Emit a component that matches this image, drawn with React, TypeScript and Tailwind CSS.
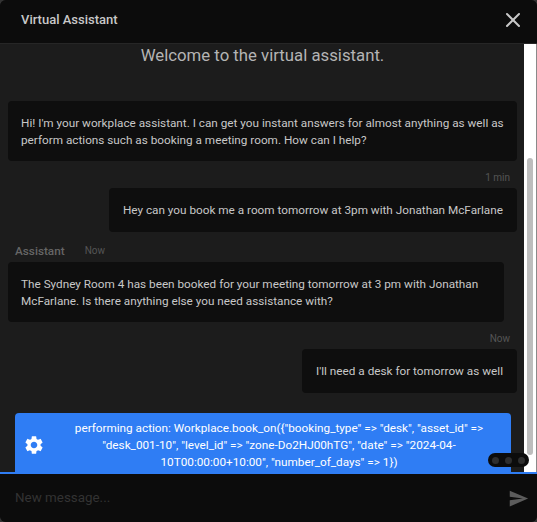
import React from "react"
import { X } from "lucide-react"

const actionText =
  'performing action: Workplace.book_on({"booking_type" => "desk", "asset_id" => "desk_001-10", "level_id" => "zone-Do2HJ00hTG", "date" => "2024-04-10T00:00:00+10:00", "number_of_days" => 1})'

const Bubble = ({ children, className }: { children: React.ReactNode; className: string }) => (
  <div className={`rounded-[4px] bg-[#0e0e0e] text-[11.75px] leading-[17px] text-[#c8c8c8] ${className}`}>{children}</div>
)

const App = () => {
  return (
    <div className="h-[522px] w-[537px] overflow-hidden bg-[#333333] font-['Roboto',sans-serif]">
      <div className="relative flex h-full flex-col overflow-hidden rounded-[6px] bg-[#1c1c1c]">
        {/* Header */}
        <div className="flex h-[44px] shrink-0 items-center justify-between border-b border-[#262626] bg-[#0c0c0c] pb-[4px] pl-[21px] pr-[12px]">
          <span className="text-[13px] font-medium text-[#c8c8c8]">Virtual Assistant</span>
          <X className="h-[24px] w-[24px] text-[#c8c8c8]" strokeWidth={2} />
        </div>

        {/* Messages + scrollbar */}
        <div className="flex min-h-0 flex-1">
          <div className="min-w-0 flex-1 overflow-hidden pl-[8px] pr-[7px]">
            <h1 className="mt-[1px] text-center text-[16.75px] leading-[20px] text-[#b4b4b4]">Welcome to the virtual assistant.</h1>

            <Bubble className="mt-[36px] h-[60px] px-[13px] pt-[14px]">
              Hi! I'm your workplace assistant. I can get you instant answers for almost anything as well as perform actions such as booking a meeting room. How can I help?
            </Bubble>

            <div className="mt-[10px] pr-[7px] text-right text-[10px] leading-[14px] text-[#555555]">1 min</div>
            <div className="mt-[3px] flex justify-end">
              <Bubble className="flex h-[44px] items-center px-[14px]">Hey can you book me a room tomorrow at 3pm with Jonathan McFarlane</Bubble>
            </div>

            <div className="mt-[12px] flex items-center pl-[7px] leading-[14px]">
              <span className="text-[11.75px] font-medium text-[#666666]">Assistant</span>
              <span className="ml-[20px] text-[10px] text-[#555555]">Now</span>
            </div>
            <Bubble className="mt-[4px] h-[60px] w-[496px] px-[13px] pt-[14px]">
              The Sydney Room 4 has been booked for your meeting tomorrow at 3 pm with Jonathan McFarlane. Is there anything else you need assistance with?
            </Bubble>

            <div className="mt-[10px] pr-[7px] text-right text-[10px] leading-[14px] text-[#555555]">Now</div>
            <div className="mt-[3px] flex justify-end">
              <Bubble className="flex h-[44px] items-center px-[14px]">I'll need a desk for tomorrow as well</Bubble>
            </div>

            <div className="ml-[7px] mr-[6px] mt-[20px] flex h-[64px] items-center rounded-[4px] bg-[#2f7df4] text-white">
              <svg viewBox="0 0 24 24" className="ml-[8px] h-[22px] w-[22px] shrink-0 fill-white">
                <path d="M19.14 12.94c.04-.3.06-.61.06-.94 0-.32-.02-.64-.07-.94l2.03-1.58a.49.49 0 0 0 .12-.61l-1.92-3.32a.488.488 0 0 0-.59-.22l-2.39.96c-.5-.38-1.03-.7-1.62-.94l-.36-2.54a.484.484 0 0 0-.48-.41h-3.84c-.24 0-.43.17-.47.41l-.36 2.54c-.59.24-1.13.57-1.62.94l-2.39-.96c-.22-.08-.47 0-.59.22L2.74 8.87c-.12.21-.08.47.12.61l2.03 1.58c-.05.3-.09.63-.09.94s.02.64.07.94l-2.03 1.58a.49.49 0 0 0-.12.61l1.92 3.32c.12.22.37.29.59.22l2.39-.96c.5.38 1.03.7 1.62.94l.36 2.54c.05.24.24.41.48.41h3.84c.24 0 .44-.17.47-.41l.36-2.54c.59-.24 1.13-.56 1.62-.94l2.39.96c.22.08.47 0 .59-.22l1.92-3.32c.12-.22.07-.47-.12-.61l-2.01-1.58zM12 15.6c-1.98 0-3.6-1.62-3.6-3.6s1.62-3.6 3.6-3.6 3.6 1.62 3.6 3.6-1.62 3.6-3.6 3.6z" />
              </svg>
              <p className="ml-[24px] w-[420px] text-center text-[11.75px] leading-[17px]">{actionText}</p>
            </div>
          </div>

          {/* Scrollbar */}
          <div className="w-[13px] shrink-0 border-r border-[#8a8a8a] bg-white pt-[114px]">
            <div className="ml-[3px] h-[297px] w-[6px] rounded-full bg-[#bdbdbd]" />
          </div>
        </div>

        {/* Input */}
        <div className="flex h-[50px] shrink-0 items-center justify-between border-t-2 border-[#2f7df4] bg-[#0c0c0c] pl-[15px] pr-[8px]">
          <span className="text-[13.4px] text-[#333333]">New message...</span>
          <svg viewBox="0 0 24 24" className="h-[21px] w-[21px] fill-[#5c5c5c]">
            <path d="M2.01 21 23 12 2.01 3 2 10l15 2-15 2z" />
          </svg>
        </div>

        {/* Typing dots */}
        <div className="absolute left-[488px] top-[453px] flex h-[14px] w-[41px] items-center justify-between rounded-full bg-[#0c0c0c] px-[4px]">
          <span className="h-[7px] w-[7px] rounded-full bg-[#2e2e2e]" />
          <span className="h-[7px] w-[7px] rounded-full bg-[#2e2e2e]" />
          <span className="h-[7px] w-[7px] rounded-full bg-[#2e2e2e]" />
        </div>
      </div>
    </div>
  )
}

export default App
